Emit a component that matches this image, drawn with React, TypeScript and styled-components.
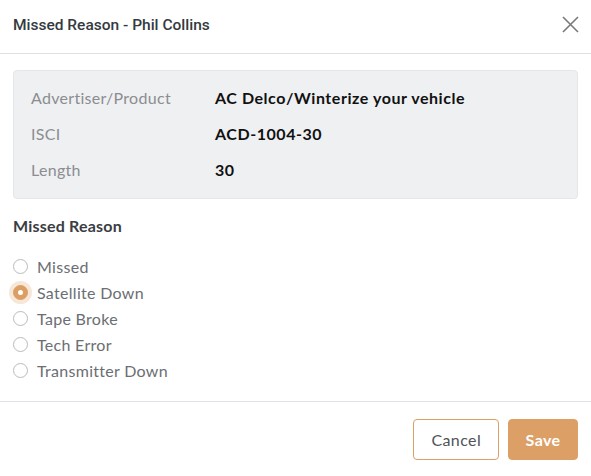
import React, { useState } from "react";
import styled, { createGlobalStyle } from "styled-components";

const Global = createGlobalStyle`
  html, body { margin: 0; padding: 0; background: #fff; }
  body { font-family: Lato, "Open Sans", sans-serif; }
  * { box-sizing: border-box; }
`;

const Modal = styled.div`
  width: 591px;
  height: 476px;
  background: #fff;
  display: flex;
  flex-direction: column;
`;

const Header = styled.div`
  display: flex;
  align-items: center;
  justify-content: space-between;
  padding: 13px 12px 16px 13px;
  border-bottom: 1px solid #dee2e6;
`;

const Title = styled.h5`
  margin: 0;
  font-family: Roboto, "Noto Sans", sans-serif;
  font-size: 15.5px;
  font-weight: 500;
  line-height: 24px;
  color: #343a40;
`;

const Close = styled.button`
  border: 0;
  background: none;
  padding: 0;
  width: 18px;
  height: 18px;
  margin-top: -2px;
  display: flex;
  align-items: center;
  justify-content: center;
  cursor: pointer;
`;

const Body = styled.div`
  padding: 16px 13px 18px;
  border-bottom: 1px solid #dee2e6;
`;

const InfoBox = styled.div`
  background: #eff0f2;
  border: 1px solid #e4e6e9;
  border-radius: 4px;
  padding: 8px 17px 11px;
`;

const InfoRow = styled.div`
  display: grid;
  grid-template-columns: 184px 1fr;
  height: 36px;
  align-items: center;
  font-size: 16px;
  letter-spacing: 0.3px;
`;

const Label = styled.span`
  color: #8b8d90;
`;

const Value = styled.span`
  color: #111;
  font-weight: 700;
  letter-spacing: 0.55px;
`;

const SectionTitle = styled.div`
  margin-top: 15px;
  font-size: 16px;
  line-height: 24px;
  font-weight: 700;
  color: #3a3d42;
  letter-spacing: 0.2px;
`;

const RadioList = styled.div`
  margin-top: 15px;
  display: flex;
  flex-direction: column;
`;

const RadioRow = styled.label`
  display: flex;
  align-items: center;
  height: 26px;
  font-size: 16px;
  color: #6b6e72;
  cursor: pointer;
  letter-spacing: 0.3px;
`;

const RadioCircle = styled.span<{ $checked: boolean }>`
  width: 15px;
  height: 15px;
  border-radius: 50%;
  margin-right: 9px;
  flex: none;
  border: 1px solid ${(p) => (p.$checked ? "#dc9f63" : "#b9bbbe")};
  background: ${(p) => (p.$checked ? "#dc9f63" : "#fff")};
  box-shadow: ${(p) => (p.$checked ? "0 0 0 4px rgba(220,159,99,0.25)" : "none")};
  display: flex;
  align-items: center;
  justify-content: center;
  &::after {
    content: "";
    width: 5px;
    height: 5px;
    border-radius: 50%;
    background: #fff;
    display: ${(p) => (p.$checked ? "block" : "none")};
  }
`;

const Footer = styled.div`
  display: flex;
  justify-content: flex-end;
  gap: 9px;
  padding: 17px 13px 15px;
`;

const Button = styled.button<{ $primary?: boolean }>`
  height: 41px;
  padding: 0 ${(p) => (p.$primary ? 16.5 : 17)}px;
  border-radius: 4px;
  font-family: Lato, "Open Sans", sans-serif;
  font-size: 16px;
  letter-spacing: 0.4px;
  border: 1px solid #dca067;
  background: ${(p) => (p.$primary ? "#dca067" : "#fff")};
  color: ${(p) => (p.$primary ? "#fff" : "#4f5358")};
  font-weight: ${(p) => (p.$primary ? 700 : 400)};
  cursor: pointer;
`;

const reasons = ["Missed", "Satellite Down", "Tape Broke", "Tech Error", "Transmitter Down"];

export default function App() {
  const [selected, setSelected] = useState("Satellite Down");
  return (
    <>
      <Global />
      <Modal>
        <Header>
          <Title>Missed Reason - Phil Collins</Title>
          <Close aria-label="Close">
            <svg width="17" height="17" viewBox="0 0 17 17">
              <path d="M1 1L16 16M16 1L1 16" stroke="#7a7a7a" strokeWidth="1.6" />
            </svg>
          </Close>
        </Header>
        <Body>
          <InfoBox>
            <InfoRow>
              <Label>Advertiser/Product</Label>
              <Value>AC Delco/Winterize your vehicle</Value>
            </InfoRow>
            <InfoRow>
              <Label>ISCI</Label>
              <Value>ACD-1004-30</Value>
            </InfoRow>
            <InfoRow>
              <Label>Length</Label>
              <Value>30</Value>
            </InfoRow>
          </InfoBox>
          <SectionTitle>Missed Reason</SectionTitle>
          <RadioList>
            {reasons.map((r) => (
              <RadioRow key={r} onClick={() => setSelected(r)}>
                <RadioCircle $checked={selected === r} />
                {r}
              </RadioRow>
            ))}
          </RadioList>
        </Body>
        <Footer>
          <Button>Cancel</Button>
          <Button $primary>Save</Button>
        </Footer>
      </Modal>
    </>
  );
}
